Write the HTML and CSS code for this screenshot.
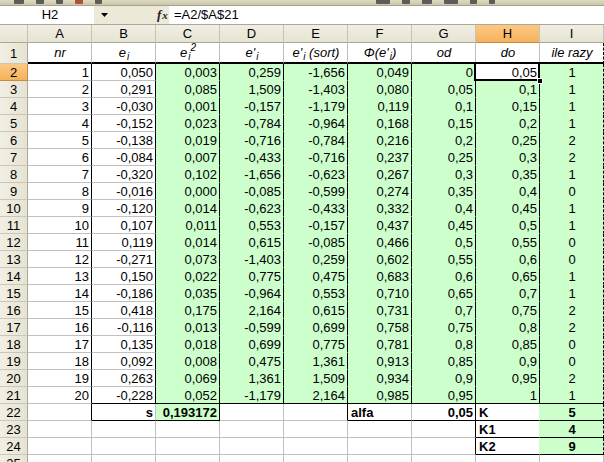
FILE: index.html
```html
<!DOCTYPE html>
<html>
<head>
<meta charset="utf-8">
<link rel="stylesheet" href="styles.css">
</head>
<body>
<div class="toolbar">
  <span class="tb" style="width:10px"></span>
  <span class="tb" style="width:8px"></span>
  <span class="tb" style="width:7px"></span>
  <span class="tb red" style="width:8px"></span>
  <span class="tb" style="width:7px"></span>
  <span class="gap"></span>
  <span class="tb" style="width:14px"></span>
  <span class="tb" style="width:8px"></span>
  <span class="tb" style="width:10px"></span>
  <span class="tb" style="width:14px"></span>
  <span class="tb" style="width:7px"></span>
  <span class="tb" style="width:6px"></span>
</div>
<div class="fbar">
  <div class="namebox">H2</div>
  <div class="nbtn"><svg width="7" height="4" viewBox="0 0 7 4"><path d="M0 0h7L3.5 4z" fill="#000"/></svg></div>
  <div class="fx"><i>f</i><i class="x">x</i></div>
  <div class="formula">=A2/$A$21</div>
</div>
<table class="sheet">
  <colgroup>
    <col class="rh"><col class="c"><col class="c"><col class="c"><col class="c"><col class="c"><col class="c"><col class="c"><col class="c"><col class="c">
  </colgroup>
  <thead>
    <tr class="ch"><th></th><th>A</th><th>B</th><th>C</th><th>D</th><th>E</th><th>F</th><th>G</th><th class="hl">H</th><th>I</th></tr>
  </thead>
  <tbody>
    <tr class="r1"><th>1</th><td>nr</td><td>e<sub>i</sub></td><td>e<sub>i</sub><sup>2</sup></td><td>e'<sub>i</sub></td><td>e'<sub>i</sub> (sort)</td><td>Φ(e'<sub>i</sub>)</td><td>od</td><td>do</td><td>ile razy</td></tr>
    <tr class="d"><th class="hl">2</th><td>1</td><td>0,050</td><td>0,003</td><td>0,259</td><td>-1,656</td><td>0,049</td><td>0</td><td class="sel">0,05<span class="selbox"></span><span class="handle"></span></td><td>1</td></tr>
    <tr class="d"><th>3</th><td>2</td><td>0,291</td><td>0,085</td><td>1,509</td><td>-1,403</td><td>0,080</td><td>0,05</td><td>0,1</td><td>1</td></tr>
    <tr class="d"><th>4</th><td>3</td><td>-0,030</td><td>0,001</td><td>-0,157</td><td>-1,179</td><td>0,119</td><td>0,1</td><td>0,15</td><td>1</td></tr>
    <tr class="d"><th>5</th><td>4</td><td>-0,152</td><td>0,023</td><td>-0,784</td><td>-0,964</td><td>0,168</td><td>0,15</td><td>0,2</td><td>1</td></tr>
    <tr class="d"><th>6</th><td>5</td><td>-0,138</td><td>0,019</td><td>-0,716</td><td>-0,784</td><td>0,216</td><td>0,2</td><td>0,25</td><td>2</td></tr>
    <tr class="d"><th>7</th><td>6</td><td>-0,084</td><td>0,007</td><td>-0,433</td><td>-0,716</td><td>0,237</td><td>0,25</td><td>0,3</td><td>2</td></tr>
    <tr class="d"><th>8</th><td>7</td><td>-0,320</td><td>0,102</td><td>-1,656</td><td>-0,623</td><td>0,267</td><td>0,3</td><td>0,35</td><td>1</td></tr>
    <tr class="d"><th>9</th><td>8</td><td>-0,016</td><td>0,000</td><td>-0,085</td><td>-0,599</td><td>0,274</td><td>0,35</td><td>0,4</td><td>0</td></tr>
    <tr class="d"><th>10</th><td>9</td><td>-0,120</td><td>0,014</td><td>-0,623</td><td>-0,433</td><td>0,332</td><td>0,4</td><td>0,45</td><td>1</td></tr>
    <tr class="d"><th>11</th><td>10</td><td>0,107</td><td>0,011</td><td>0,553</td><td>-0,157</td><td>0,437</td><td>0,45</td><td>0,5</td><td>1</td></tr>
    <tr class="d"><th>12</th><td>11</td><td>0,119</td><td>0,014</td><td>0,615</td><td>-0,085</td><td>0,466</td><td>0,5</td><td>0,55</td><td>0</td></tr>
    <tr class="d"><th>13</th><td>12</td><td>-0,271</td><td>0,073</td><td>-1,403</td><td>0,259</td><td>0,602</td><td>0,55</td><td>0,6</td><td>0</td></tr>
    <tr class="d"><th>14</th><td>13</td><td>0,150</td><td>0,022</td><td>0,775</td><td>0,475</td><td>0,683</td><td>0,6</td><td>0,65</td><td>1</td></tr>
    <tr class="d"><th>15</th><td>14</td><td>-0,186</td><td>0,035</td><td>-0,964</td><td>0,553</td><td>0,710</td><td>0,65</td><td>0,7</td><td>1</td></tr>
    <tr class="d"><th>16</th><td>15</td><td>0,418</td><td>0,175</td><td>2,164</td><td>0,615</td><td>0,731</td><td>0,7</td><td>0,75</td><td>2</td></tr>
    <tr class="d"><th>17</th><td>16</td><td>-0,116</td><td>0,013</td><td>-0,599</td><td>0,699</td><td>0,758</td><td>0,75</td><td>0,8</td><td>2</td></tr>
    <tr class="d"><th>18</th><td>17</td><td>0,135</td><td>0,018</td><td>0,699</td><td>0,775</td><td>0,781</td><td>0,8</td><td>0,85</td><td>0</td></tr>
    <tr class="d"><th>19</th><td>18</td><td>0,092</td><td>0,008</td><td>0,475</td><td>1,361</td><td>0,913</td><td>0,85</td><td>0,9</td><td>0</td></tr>
    <tr class="d"><th>20</th><td>19</td><td>0,263</td><td>0,069</td><td>1,361</td><td>1,509</td><td>0,934</td><td>0,9</td><td>0,95</td><td>2</td></tr>
    <tr class="d last"><th>21</th><td>20</td><td>-0,228</td><td>0,052</td><td>-1,179</td><td>2,164</td><td>0,985</td><td>0,95</td><td>1</td><td>1</td></tr>
    <tr class="t"><th>22</th><td class="br"></td><td class="b bb">s</td><td class="b bb br grn">0,193172</td><td></td><td class="br"></td><td class="b bb l">alfa</td><td class="b bb br">0,05</td><td class="b bb l brg">K</td><td class="b bb grn">5</td></tr>
    <tr class="t"><th>23</th><td></td><td></td><td></td><td></td><td></td><td></td><td class="br"></td><td class="b bb l brg">K1</td><td class="b bb grn">4</td></tr>
    <tr class="t"><th>24</th><td></td><td></td><td></td><td></td><td></td><td></td><td class="br"></td><td class="b bb l brg">K2</td><td class="b bb grn">9</td></tr>
    <tr class="t end"><th>25</th><td></td><td></td><td></td><td></td><td></td><td></td><td></td><td></td><td></td></tr>
  </tbody>
</table>
</body>
</html>
```
FILE: styles.css
```css
* { box-sizing: border-box; }
html, body { margin: 0; padding: 0; }
body {
  width: 604px;
  height: 462px;
  overflow: hidden;
  background: #fff;
  font-family: "Liberation Sans", Arial, sans-serif;
  font-size: 13px;
  color: #000;
}
.toolbar {
  height: 6px;
  background: linear-gradient(#dedac2, #c9c6ab);
  border-bottom: 1px solid #a6a38b;
  display: flex;
  gap: 12px;
  padding-left: 14px;
  overflow: hidden;
}
.toolbar .tb { height: 4px; background: #5c5c58; border-radius: 0 0 1px 1px; }
.toolbar .tb.red { background: #b0503a; }
.toolbar .gap { width: 250px; }
.fbar {
  height: 19px;
  display: flex;
  background: #ece9d8;
  border-bottom: 1px solid #aca899;
  line-height: 18px;
}
.namebox {
  width: 94px;
  background: #fff;
  text-align: center;
  padding-left: 6px;
}
.nbtn {
  width: 20px;
  display: flex;
  align-items: center;
  justify-content: center;
  padding-bottom: 1px;
}
.fx {
  width: 55px;
  padding-left: 43px;
  font-family: "Liberation Serif", serif;
  font-size: 13px;
  font-weight: bold;
  color: #222;
}
.fx .x { font-size: 11px; margin-left: 1px; }
.formula {
  flex: 1;
  background: #fff;
  padding-left: 5px;
}
.sheet {
  border-collapse: separate;
  border-spacing: 0;
  table-layout: fixed;
  width: 604px;
}
.sheet col.rh { width: 28px; }
.sheet col.c { width: 64px; }
.sheet th {
  font-weight: normal;
  padding: 0;
  text-align: center;
  background: #ece9d8;
  white-space: nowrap;
}
.sheet thead th {
  height: 18px;
  line-height: 17px;
  border-right: 1px solid #c7c4b3;
  border-bottom: 1px solid #aca899;
  background: linear-gradient(#f1efe4, #e6e3d2);
}
.sheet tbody th {
  border-right: 1px solid #aca899;
  border-bottom: 1px solid #cbc7b6;
  line-height: 15px;
  vertical-align: middle;
  padding-top: 1px;
  background: linear-gradient(90deg, #f1efe4, #e6e3d2);
}
.sheet th.hl, .sheet thead th.hl {
  background: linear-gradient(#fbc985, #f5b15c);
  border-bottom-color: #c98a3c;
}
.sheet tbody th.hl { border-right-color: #c98a3c; }
.sheet td {
  padding: 0 2px 0 3px;
  border-right: 1px solid #c0c0c0;
  border-bottom: 1px solid #c0c0c0;
  white-space: nowrap;
  overflow: hidden;
  vertical-align: bottom;
  line-height: 15px;
  text-align: right;
}
.sheet tbody tr { height: 17px; }
.sheet tr.r1 { height: 21px; }
.sheet tr.r1 td {
  border-bottom: 2px solid #000;
  font-style: italic;
  text-align: center;
  vertical-align: middle;
}
.sheet sub {
  font-size: 10px;
  vertical-align: -3px;
  line-height: 0;
  margin-left: 1px;
}
.sheet sup {
  font-size: 10px;
  vertical-align: 6px;
  line-height: 0;
}
.sheet tr.d td { border-right-color: #000; }
.sheet tr.d td:nth-child(n+4) {
  background: #ccffcc;
  border-bottom-color: #ccffcc;
}
.sheet tr.d.last td:nth-child(n+3) { border-bottom-color: #000; }
.sheet td:nth-child(10) {
  text-align: center;
  border-right: 1px dashed #000;
}
.sheet tr.end td:nth-child(10) { border-right: 1px solid #c0c0c0; }
.sheet tr.d td.sel {
  position: relative;
  overflow: visible;
  background: #fff;
}
.selbox {
  position: absolute;
  left: -2px;
  top: -2px;
  right: -1px;
  bottom: -1px;
  border: 2px solid #000;
}
.handle {
  position: absolute;
  right: -4px;
  bottom: -4px;
  width: 6px;
  height: 6px;
  background: #000;
  border: 1px solid #fff;
}
.sheet td.b { font-weight: bold; }
.sheet td.l { text-align: left; }
.sheet td.bb { border-bottom-color: #000; }
.sheet td.br { border-right-color: #000; }
.sheet td.brg { border-right-color: #ccffcc; }
.sheet td.grn { background: #ccffcc; }
```
